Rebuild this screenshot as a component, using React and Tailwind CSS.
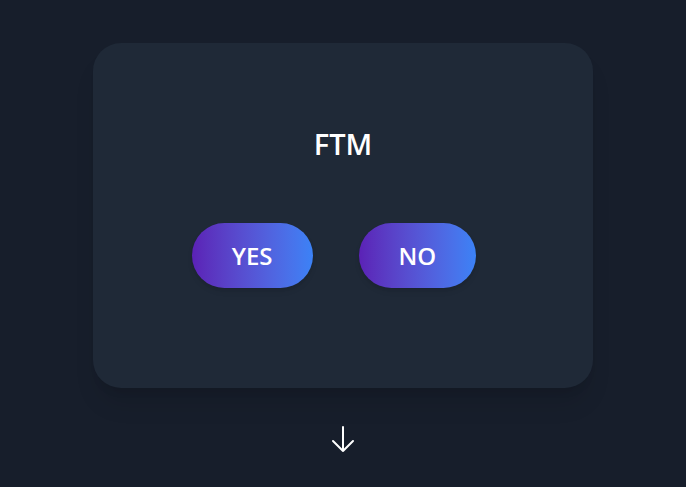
import React from "react";

function VoteButton({ label }) {
  return (
    <button className="h-[65px] px-10 rounded-full bg-gradient-to-r from-[#5b21b6] to-[#3b82f6] text-white text-2xl font-semibold shadow-md">
      {label}
    </button>
  );
}

export default function App() {
  return (
    <div
      className="min-h-[487px] w-full bg-[#171e2b] flex flex-col items-center pt-[43px]"
      style={{ fontFamily: '"Open Sans", "Noto Sans", sans-serif' }}
    >
      {/* card */}
      <div className="w-[500px] h-[345px] rounded-[28px] bg-[#1f2937] shadow-xl flex flex-col items-center pt-[81px]">
        <h2 className="text-white text-[29px] leading-[40px] font-semibold">FTM</h2>
        <div className="flex flex-row gap-[46px] mt-[59px] pr-[18px]">
          <VoteButton label="YES" />
          <VoteButton label="NO" />
        </div>
      </div>
      <svg
        className="mt-[35px] w-8 h-8 text-white"
        viewBox="0 0 24 24"
        fill="none"
        stroke="currentColor"
        strokeWidth="1.5"
        strokeLinecap="round"
        strokeLinejoin="round"
      >
        <path d="M19.5 13.5 12 21m0 0-7.5-7.5M12 21V3" />
      </svg>
    </div>
  );
}
